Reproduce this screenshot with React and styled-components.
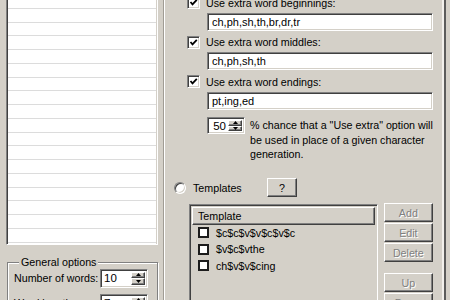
import React from "react";
import styled, { createGlobalStyle, css } from "styled-components";

const GlobalStyle = createGlobalStyle`
  html, body {
    margin: 0;
    padding: 0;
  }
  body {
    background: #d4d0c8;
    font-family: "Liberation Sans", Arial, sans-serif;
    font-size: 10.7px;
    color: #000;
    overflow: hidden;
  }
`;

const sunken = css`
  box-sizing: border-box;
  border: 1px solid;
  border-color: #808080 #ffffff #ffffff #808080;
  box-shadow: inset 1px 1px 0 #404040, inset -1px -1px 0 #d4d0c8;
`;

const raised = css`
  box-sizing: border-box;
  border: 1px solid;
  border-color: #ffffff #404040 #404040 #ffffff;
  box-shadow: inset -1px -1px 0 #808080;
  background: #d4d0c8;
`;

const Window = styled.div`
  display: flex;
  height: 300px;
  overflow: hidden;
`;

const LeftPane = styled.div`
  width: 158px;
  flex-shrink: 0;
  display: flex;
  flex-direction: column;

  & > * {
    flex-shrink: 0;
  }
`;

const ListBox = styled.div`
  ${sunken}
  margin: -7px 0 0 6px;
  height: 252px;
  padding: 1px;
  background: #fff;
  overflow: hidden;
`;

const ListRow = styled.div`
  box-sizing: border-box;
  height: 13.75px;
  border-bottom: 1px solid #dcdcdc;
  background: #fff;
`;

const GroupBox = styled.fieldset`
  margin: 10.5px 0 0 7px;
  width: 151px;
  box-sizing: border-box;
  padding: 0 6px 6px;
  border: 1px solid #808080;
  box-shadow: inset 1px 1px 0 #fff, 1px 1px 0 #fff;
  display: flex;
  flex-direction: column;
  gap: 6px;
`;

const Legend = styled.legend`
  padding: 0 2px;
  margin-left: 5px;
  line-height: 13px;
  background: #d4d0c8;
`;

const FieldRow = styled.div`
  display: flex;
  align-items: center;
  height: 19px;
  flex-shrink: 0;
`;

const FieldLabel = styled.span`
  width: 86px;
  flex-shrink: 0;
`;

const SpinFrame = styled.div`
  ${sunken}
  display: flex;
  flex-shrink: 0;
  width: ${(p) => p.$width}px;
  height: ${(p) => p.$height}px;
  padding: 2px;
  background: #fff;
`;

const SpinValue = styled.div`
  flex: 1;
  display: flex;
  align-items: center;
  justify-content: ${(p) => (p.$right ? "flex-end" : "flex-start")};
  padding: 0 ${(p) => (p.$right ? "2px" : "1px")};
  font-size: 11.5px;
`;

const SpinArrows = styled.div`
  width: 14px;
  display: flex;
  flex-direction: column;
`;

const ArrowBtn = styled.div`
  ${raised}
  flex: 1;
  display: flex;
  align-items: center;
  justify-content: center;
`;

const Splitter = styled.div`
  margin-left: 5px;
  border-left: 1px solid #a09c94;
  border-right: 1px solid #fff;
`;

const RightPane = styled.div`
  flex: 1;
  display: flex;
  flex-direction: column;
  padding: 0 9px;
  margin-top: -4.5px;

  & > * {
    flex-shrink: 0;
  }
`;

const RightEdge = styled.div`
  width: 9px;
  flex-shrink: 0;
  box-sizing: border-box;
  border-left: 2px solid #f2f0ec;
  box-shadow: inset 2px 0 0 #5c5c5c;
  background: #d4d0c8;
`;

const CheckRow = styled.label`
  display: flex;
  align-items: center;
  height: 14px;
  margin-left: 13px;
  gap: 6px;
`;

const CheckBox = styled.span`
  ${sunken}
  width: 13px;
  height: 13px;
  background: #fff;
  display: flex;
  align-items: center;
  justify-content: center;
  flex-shrink: 0;
`;

const TextField = styled.div`
  ${sunken}
  margin: 3px 0 4.5px 33px;
  height: 18px;
  padding: 0 4px;
  background: #fff;
  display: flex;
  align-items: center;
  font-size: 11px;
`;

const ChanceRow = styled.div`
  display: flex;
  align-items: flex-start;
  gap: 5px;
  margin: 3px 0 0 33px;
`;

const ChanceText = styled.div`
  margin-top: 1px;
  line-height: 14.5px;
  white-space: nowrap;
`;

const RadioRow = styled.div`
  display: flex;
  align-items: center;
  height: 19px;
  margin-top: 16.5px;
`;

const Radio = styled.span`
  ${sunken}
  width: 12px;
  height: 12px;
  border-radius: 50%;
  background: #fff;
  flex-shrink: 0;
`;

const RadioLabel = styled.span`
  width: 74px;
  margin-left: 7px;
`;

const Button = styled.div`
  ${raised}
  width: ${(p) => p.$width || 49}px;
  height: 19px;
  flex-shrink: 0;
  display: flex;
  align-items: center;
  justify-content: center;
  color: ${(p) => (p.$disabled ? "#808080" : "#000")};
  text-shadow: ${(p) => (p.$disabled ? "1px 1px 0 #fff" : "none")};
`;

const TemplatesArea = styled.div`
  display: flex;
  gap: 6px;
  margin: 6.5px 0 0 15px;
`;

const ListView = styled.div`
  ${sunken}
  flex: 1;
  height: 110px;
  padding: 2px;
  background: #d4d0c8;
`;

const Header = styled.div`
  ${raised}
  height: 18px;
  display: flex;
  align-items: center;
  padding-left: 5px;
`;

const TemplateRow = styled.div`
  display: flex;
  align-items: center;
  height: 16.5px;
  padding-left: 6px;
  gap: 7px;
`;

const FlatBox = styled.span`
  box-sizing: border-box;
  width: 11px;
  height: 11px;
  border: 2px solid #1c1c1c;
  background: #fff;
  flex-shrink: 0;
`;

const ButtonColumn = styled.div`
  display: flex;
  flex-direction: column;
  gap: 1px;
  margin-top: -0.5px;
`;

const ButtonGap = styled.div`
  height: 9px;
  flex-shrink: 0;
`;

function Check() {
  return (
    <svg width="9" height="9" viewBox="0 0 9 9">
      <polyline points="1.5,4 3.5,6.3 7.8,1.8" fill="none" stroke="#000" strokeWidth="1.8" />
    </svg>
  );
}

function Arrow({ up }) {
  return (
    <svg width="5" height="3" viewBox="0 0 5 3">
      <polygon points={up ? "0,3 5,3 2.5,0" : "0,0 5,0 2.5,3"} fill="#000" />
    </svg>
  );
}

function Spin({ value, width, height, right }) {
  return (
    <SpinFrame $width={width} $height={height}>
      <SpinValue $right={right}>{value}</SpinValue>
      <SpinArrows>
        <ArrowBtn>
          <Arrow up />
        </ArrowBtn>
        <ArrowBtn>
          <Arrow />
        </ArrowBtn>
      </SpinArrows>
    </SpinFrame>
  );
}

const extras = [
  { label: "Use extra word beginnings:", value: "ch,ph,sh,th,br,dr,tr" },
  { label: "Use extra word middles:", value: "ch,ph,sh,th" },
  { label: "Use extra word endings:", value: "pt,ing,ed" },
];

const templates = ["$c$c$v$v$c$v$c", "$v$c$vthe", "ch$v$v$cing"];

export default function App() {
  return (
    <>
      <GlobalStyle />
      <Window>
        <LeftPane>
          <ListBox>
            {Array.from({ length: 19 }).map((_, i) => (
              <ListRow key={i} />
            ))}
          </ListBox>
          <GroupBox>
            <Legend>General options</Legend>
            <FieldRow>
              <FieldLabel>Number of words:</FieldLabel>
              <Spin value="10" width={48} height={19} />
            </FieldRow>
            <FieldRow>
              <FieldLabel>Word length:</FieldLabel>
              <Spin value="7" width={48} height={19} />
            </FieldRow>
          </GroupBox>
        </LeftPane>
        <Splitter />
        <RightPane>
          {extras.map((e) => (
            <React.Fragment key={e.label}>
              <CheckRow>
                <CheckBox>
                  <Check />
                </CheckBox>
                {e.label}
              </CheckRow>
              <TextField>{e.value}</TextField>
            </React.Fragment>
          ))}
          <ChanceRow>
            <Spin value="50" width={38} height={17} right />
            <ChanceText>
              % chance that a "Use extra" option will
              <br />
              be used in place of a given character
              <br />
              generation.
            </ChanceText>
          </ChanceRow>
          <RadioRow>
            <Radio />
            <RadioLabel>Templates</RadioLabel>
            <Button $width={30}>?</Button>
          </RadioRow>
          <TemplatesArea>
            <ListView>
              <Header>Template</Header>
              {templates.map((t) => (
                <TemplateRow key={t}>
                  <FlatBox />
                  {t}
                </TemplateRow>
              ))}
            </ListView>
            <ButtonColumn>
              <Button $disabled>Add</Button>
              <Button $disabled>Edit</Button>
              <Button $disabled>Delete</Button>
              <ButtonGap />
              <Button $disabled>Up</Button>
              <Button $disabled>Down</Button>
            </ButtonColumn>
          </TemplatesArea>
        </RightPane>
        <RightEdge />
      </Window>
    </>
  );
}
